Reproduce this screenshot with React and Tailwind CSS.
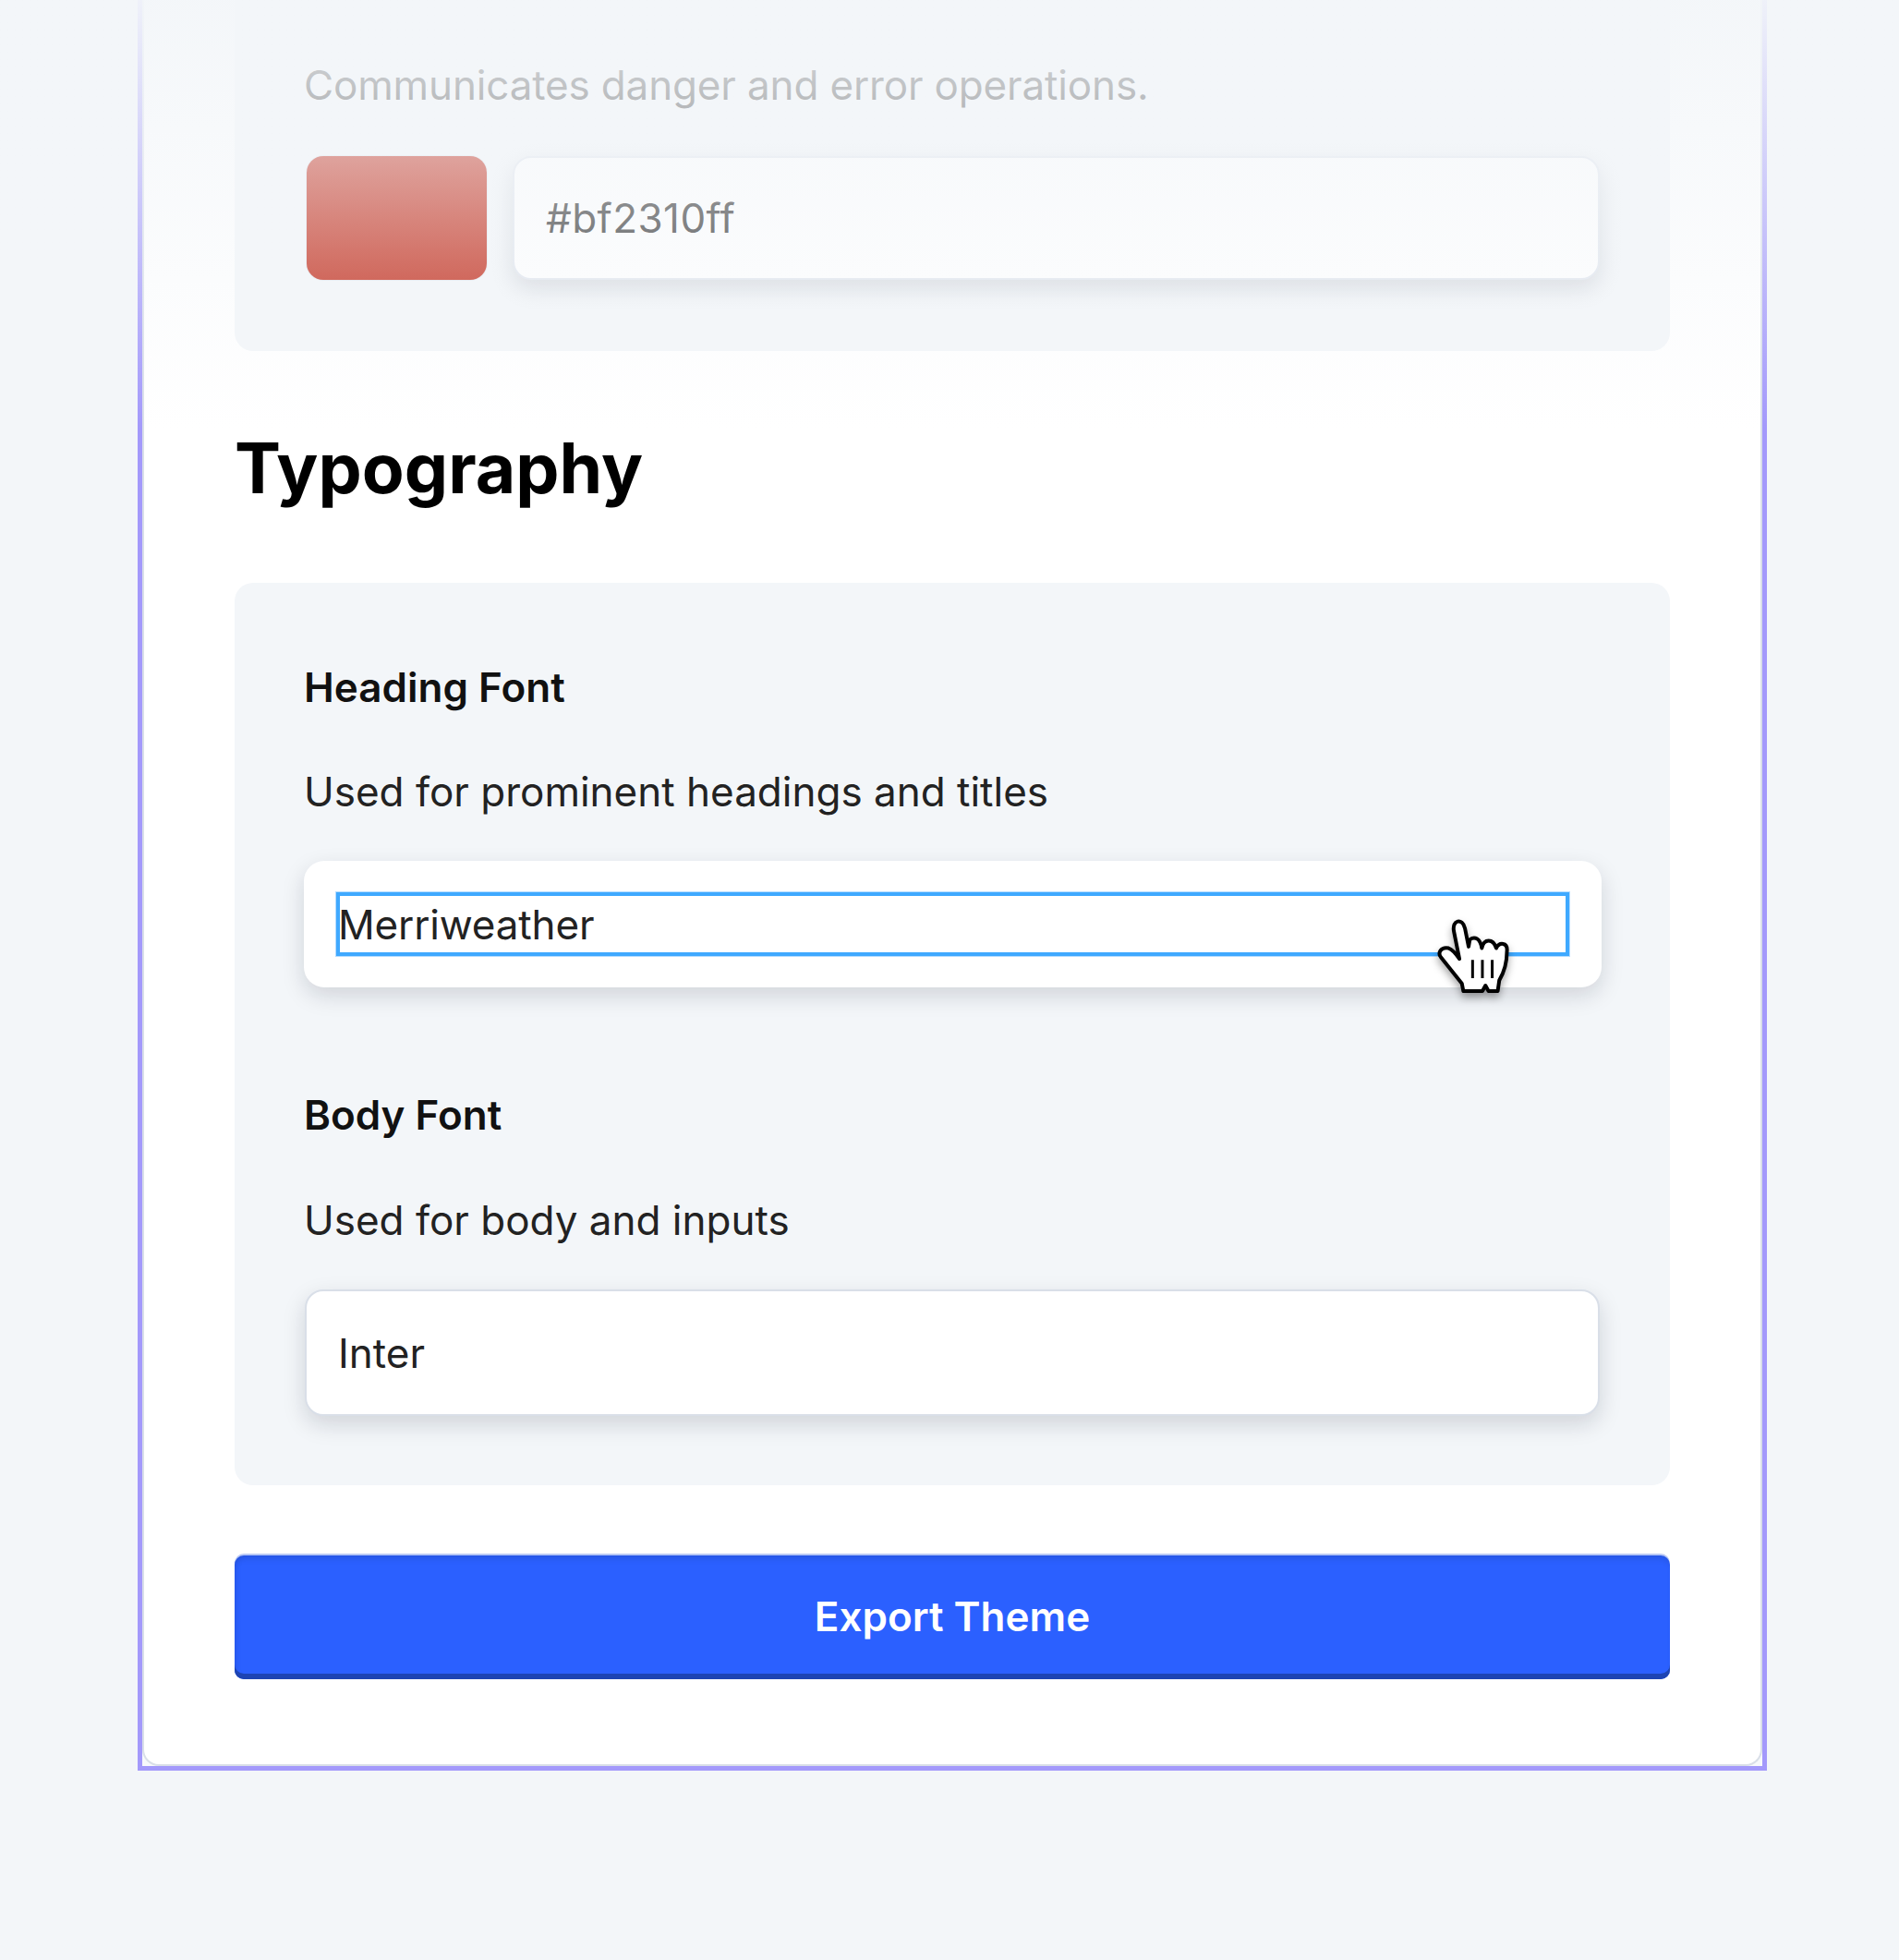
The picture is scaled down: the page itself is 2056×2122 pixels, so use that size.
function HandCursor() {
  return (
    <svg
      className="absolute left-[1224px] top-[58px] w-[84px] h-[88px] drop-shadow-[0_5px_4px_rgba(0,0,0,0.35)]"
      viewBox="310 180 250 265"
      fill="none"
    >
      <path
        d="M390 325 L372 235 C365 198 400 190 408 225 L420 285 L424 262 C440 250 458 258 463 290 C470 258 500 258 510 290 C520 270 548 270 545 300 C545 340 535 370 520 395 L515 430 L485 430 L475 412 L465 430 L403 430 L398 405 L330 320 C318 305 330 285 355 290 C370 295 380 310 390 325 Z"
        fill="#fff"
        stroke="#000"
        strokeWidth="12"
        strokeLinejoin="round"
      />
      <path d="M433 328 V388 M465 328 V388 M497 328 V388" stroke="#000" strokeWidth="9" />
    </svg>
  );
}

export default function App() {
  const inputShadow = "shadow-[0_9px_24px_rgba(15,23,42,0.15)]";
  return (
    <div className="relative h-[2122px] bg-[#f3f6f9] overflow-hidden font-['Inter',sans-serif]">
      <div className="ml-[149px] w-[1764px] h-[1917px] bg-[#f7f9fb] border-x-[5px] border-b-[5px] border-[#a399fb]">
        <div className="h-full bg-white border-x-2 border-b-2 border-[#d9dfe8] rounded-b-[18px] px-[98px]">
          <div className="h-[380px] bg-[#f3f6f9] rounded-b-[20px] pl-[75px] pt-[66px]">
            <p className="text-[44px] leading-[52px] tracking-[-0.15px] text-[#222]">Communicates danger and error operations.</p>
            <div className="flex gap-[28px] mt-[51px] ml-[3px]">
              <div className="w-[195px] h-[134px] rounded-[18px] bg-[#bf2310] shadow-[0_0_0_1px_#e4e8ee]" />
              <div className={`w-[1177px] h-[134px] rounded-[20px] bg-white border-2 border-[#e1e6ee] flex items-center px-[34px] text-[44px] tracking-[0.4px] text-[#222] ${inputShadow}`}>#bf2310ff</div>
            </div>
          </div>
          <h2 className="mt-[83px] text-[75px] leading-[88px] font-bold text-black">Typography</h2>
          <div className="mt-[80px] h-[977px] bg-[#f3f6f9] rounded-[20px] pl-[75px] pt-[87px]">
            <h3 className="text-[44px] leading-[52px] font-semibold text-[#111]">Heading Font</h3>
            <p className="mt-[61px] text-[44px] leading-[52px] text-[#222]">Used for prominent headings and titles</p>
            <div className={`relative mt-[49px] h-[137px] w-[1405px] bg-white rounded-[22px] pt-[34px] pl-[35px] ${inputShadow}`}>
              <div className="w-[1335px] h-[69px] border-4 border-[#3fa9ff] shadow-[0_0_0_1px_#b5dcff] flex items-center text-[44px] tracking-[-0.15px] text-[#222]">
                <span className="-ml-[2px]">Merriweather</span>
              </div>
              <HandCursor />
            </div>
            <h3 className="mt-[112px] text-[44px] leading-[52px] font-semibold text-[#111]">Body Font</h3>
            <p className="mt-[62px] text-[44px] leading-[52px] text-[#222]">Used for body and inputs</p>
            <div className={`mt-[49px] ml-[1px] w-[1402px] h-[137px] bg-white rounded-[20px] border-2 border-[#d9dfe8] flex items-center px-[34px] text-[44px] text-[#222] ${inputShadow}`}>Inter</div>
          </div>
          <button className="block mt-[76px] w-full h-[134px] pb-[2px] rounded-[10px] bg-[#2b60ff] shadow-[inset_0_-6px_0_#1d44b3,inset_0_7px_6px_-3px_rgba(0,0,0,0.1),inset_7px_0_6px_-5px_rgba(0,0,0,0.08),0_-2px_0_#b7c7f5] text-white text-[44px] font-semibold">Export Theme</button>
        </div>
      </div>
      <div className="absolute inset-x-0 top-0 h-[465px] bg-gradient-to-b from-[#f3f6f9]/95 to-transparent pointer-events-none" />
    </div>
  );
}
